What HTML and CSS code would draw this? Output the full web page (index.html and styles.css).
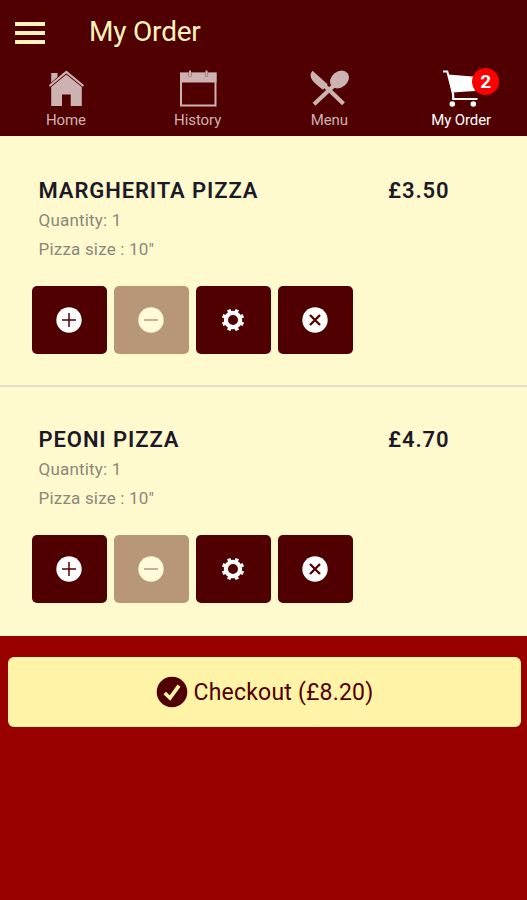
FILE: index.html
```html
<!DOCTYPE html>
<html lang="en">
<head>
    <meta charset="UTF-8">
    <meta name="viewport" content="width=device-width, initial-scale=1.0">
    <title>My Order</title>
    <link rel="stylesheet" href="styles.css">
</head>
<body>
    <!-- shared icons -->
    <svg class="icon-defs" aria-hidden="true">
        <symbol id="icon-plus" viewBox="0 0 26 26">
            <circle cx="13" cy="13" r="12.7" fill="currentColor"/>
            <path d="M6 13H20M13 6V20" stroke="#500000" stroke-width="1.5"/>
        </symbol>
        <symbol id="icon-minus" viewBox="0 0 26 26">
            <circle cx="13" cy="13" r="12.7" fill="currentColor"/>
            <path d="M6 13H20" stroke="#b89779" stroke-width="1.5"/>
        </symbol>
        <symbol id="icon-gear" viewBox="0 0 26 26">
            <circle cx="13" cy="13" r="7.1" fill="none" stroke="currentColor" stroke-width="4.2"/>
            <g stroke="currentColor" stroke-width="3.6">
                <path d="M13 1.8V6M13 20V24.2" transform="rotate(22.5 13 13)"/>
                <path d="M13 1.8V6M13 20V24.2" transform="rotate(67.5 13 13)"/>
                <path d="M13 1.8V6M13 20V24.2" transform="rotate(112.5 13 13)"/>
                <path d="M13 1.8V6M13 20V24.2" transform="rotate(157.5 13 13)"/>
            </g>
        </symbol>
        <symbol id="icon-remove" viewBox="0 0 26 26">
            <circle cx="13" cy="13" r="12.7" fill="currentColor"/>
            <path d="M8 8L18 18M18 8L8 18" stroke="#500000" stroke-width="2.3"/>
        </symbol>
    </svg>

    <header class="header">
        <div class="title-bar">
            <button class="menu-toggle" aria-label="Open menu">
                <span></span>
                <span></span>
                <span></span>
            </button>
            <h1>My Order</h1>
        </div>
        <nav class="tabs">
            <a class="tab" href="#">
                <svg class="tab-icon" viewBox="0 0 40 40">
                    <path d="M5.2 4H11.5V8L5.2 13.5Z" fill="currentColor"/>
                    <path d="M3.5 17L20.3 3L37.5 17" fill="none" stroke="currentColor" stroke-width="2.2"/>
                    <path d="M5.2 18L20.3 5.6L35.8 18V37H24.7V25.5H16V37H5.2Z" fill="currentColor"/>
                </svg>
                <span>Home</span>
            </a>
            <a class="tab" href="#">
                <svg class="tab-icon" viewBox="0 0 40 40">
                    <path d="M3 4.5H37.5V36.4H3Z" fill="none" stroke="currentColor" stroke-width="2"/>
                    <path d="M2 3.8H38.5V13.5H2Z" fill="currentColor"/>
                    <path d="M12 3V7.5M28.5 3V7.5" stroke="#8f6060" stroke-width="3.2"/>
                    <path d="M12 1.5V7M28.5 1.5V7" stroke="currentColor" stroke-width="2"/>
                </svg>
                <span>History</span>
            </a>
            <a class="tab" href="#">
                <svg class="tab-icon" viewBox="0 0 40 40">
                    <path d="M3.5 1.8L18.6 15.2L14.2 20.8C7 15 -2.5 9 3.5 1.8Z" fill="currentColor"/>
                    <ellipse cx="30.5" cy="10.5" rx="10.2" ry="8" transform="rotate(-38 30.5 10.5)" fill="currentColor"/>
                    <path d="M5 35.2L25.5 16M16 17L34.5 34.7" stroke="currentColor" stroke-width="4.2"/>
                </svg>
                <span>Menu</span>
            </a>
            <a class="tab active" href="#">
                <svg class="tab-icon" viewBox="0 0 40 40">
                    <path d="M2 2.6H6.3L12.3 26" fill="none" stroke="currentColor" stroke-width="2"/>
                    <path d="M7 5.5L38 8L34 22L11.5 23.5Z" fill="currentColor"/>
                    <path d="M12 24L12.3 30H36.5" fill="none" stroke="currentColor" stroke-width="2.2"/>
                    <circle cx="11.3" cy="35" r="2.8" fill="currentColor"/>
                    <circle cx="32.3" cy="35" r="2.8" fill="currentColor"/>
                </svg>
                <span>My Order</span>
                <b class="badge">2</b>
            </a>
        </nav>
    </header>

    <main>
        <section class="order-item">
            <div class="item-heading">
                <h2>MARGHERITA PIZZA</h2>
                <span class="price">£3.50</span>
            </div>
            <p>Quantity: 1</p>
            <p>Pizza size : 10"</p>
            <div class="actions">
                <button aria-label="Add one"><svg><use href="#icon-plus"/></svg></button>
                <button aria-label="Take one away" disabled><svg><use href="#icon-minus"/></svg></button>
                <button aria-label="Options"><svg><use href="#icon-gear"/></svg></button>
                <button aria-label="Remove"><svg><use href="#icon-remove"/></svg></button>
            </div>
        </section>

        <section class="order-item">
            <div class="item-heading">
                <h2>PEONI PIZZA</h2>
                <span class="price">£4.70</span>
            </div>
            <p>Quantity: 1</p>
            <p>Pizza size : 10"</p>
            <div class="actions">
                <button aria-label="Add one"><svg><use href="#icon-plus"/></svg></button>
                <button aria-label="Take one away" disabled><svg><use href="#icon-minus"/></svg></button>
                <button aria-label="Options"><svg><use href="#icon-gear"/></svg></button>
                <button aria-label="Remove"><svg><use href="#icon-remove"/></svg></button>
            </div>
        </section>
    </main>

    <button class="checkout">
        <svg viewBox="0 0 32 32">
            <circle cx="16" cy="16" r="15.3" fill="#500000"/>
            <path d="M8.7 17L14 22L23 9.7" fill="none" stroke="#fff3a8" stroke-width="3.7"/>
        </svg>
        <span>Checkout (£8.20)</span>
    </button>
</body>
</html>
```

FILE: styles.css
```css
* {
    box-sizing: border-box;
}

body {
    margin: 0;
    min-height: 100vh;
    background: #990000;
    font-family: Roboto, "Liberation Sans", sans-serif;
}

h1, h2, p {
    margin: 0;
}

button {
    border: none;
    padding: 0;
    font-family: inherit;
    cursor: pointer;
}

.icon-defs {
    display: none;
}

.header {
    height: 136px;
    background: #500000;
}

.title-bar {
    display: flex;
    align-items: center;
    gap: 44px;
    height: 64px;
    padding-left: 15px;
}

.menu-toggle {
    display: flex;
    flex-direction: column;
    gap: 5px;
    width: 30px;
    padding-top: 1px;
    background: none;
}

.menu-toggle span {
    height: 4px;
    width: 100%;
    background: #fff3bd;
}

h1 {
    color: #fff3bd;
    font-size: 28px;
    font-weight: 400;
    letter-spacing: -0.2px;
    line-height: 32px;
}

.tabs {
    display: grid;
    grid-template-columns: repeat(4, 1fr);
}

.tab {
    position: relative;
    display: flex;
    flex-direction: column;
    align-items: center;
    padding-top: 5px;
    color: #cdb2b2;
    font-size: 15px;
    letter-spacing: -0.1px;
    line-height: 22px;
    text-decoration: none;
}

.tab.active {
    color: #fff;
}

.tab-icon {
    width: 40px;
    height: 40px;
}

.badge {
    position: absolute;
    top: 4px;
    left: 77px;
    width: 27px;
    height: 27px;
    border-radius: 50%;
    background: #ff0000;
    color: #fff;
    font-size: 19px;
    line-height: 27px;
    text-align: center;
}

.order-item {
    height: 249px;
    padding: 40px 31.5px 0;
    background: #fffacd;
}

.order-item:first-child {
    height: 251px;
    border-bottom: 2px solid #e3ddd2;
}

.order-item + .order-item {
    padding-top: 38px;
}

.item-heading {
    display: flex;
    justify-content: space-between;
    padding: 0 46px 0 7px;
    margin-bottom: 1px;
    color: #1d1928;
    line-height: 29px;
}

h2, .price {
    font-size: 22px;
    font-weight: 600;
    letter-spacing: 0.9px;
}

.order-item p {
    padding-left: 7px;
    color: #8c877b;
    font-size: 17px;
    letter-spacing: 0.2px;
    line-height: 29px;
}

.actions {
    display: flex;
    gap: 6.5px;
    margin-top: 22px;
}

.actions button {
    display: flex;
    align-items: center;
    justify-content: center;
    width: 75.5px;
    height: 68px;
    border-radius: 5px;
    background: #500000;
    color: #fff;
}

.actions button:disabled {
    background: #b89779;
    color: #fffad8;
}

.actions svg {
    width: 26px;
    height: 26px;
}

.checkout {
    display: flex;
    align-items: center;
    justify-content: center;
    gap: 6px;
    width: 513px;
    height: 70px;
    margin: 21px 6px 0 8px;
    border-radius: 6px;
    background: #fff3a8;
    color: #500000;
    font-size: 23px;
    letter-spacing: 0.2px;
}

.checkout svg {
    width: 32px;
    height: 32px;
}
```
